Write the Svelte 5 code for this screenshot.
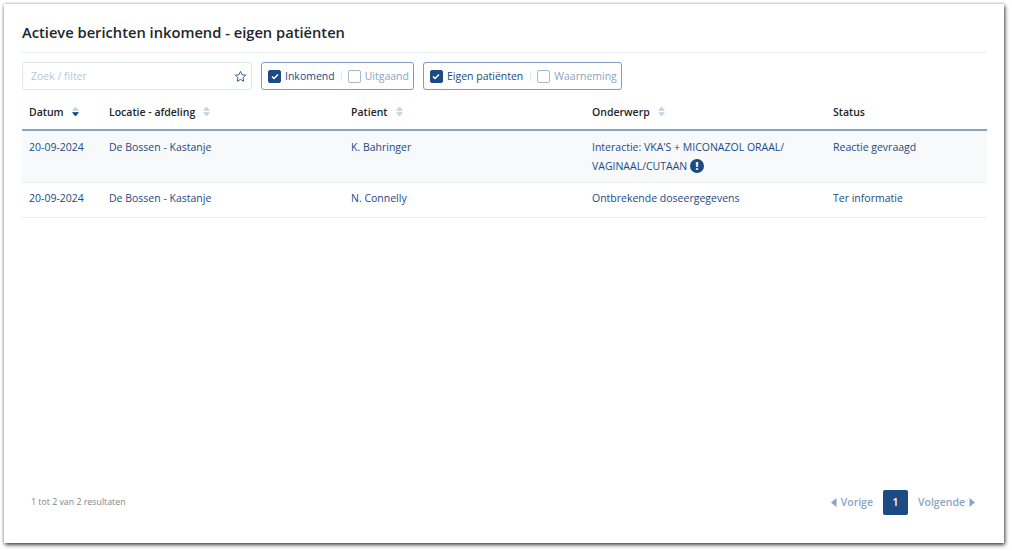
<script>
  const rows = [
    { date: '20-09-2024', loc: 'De Bossen - Kastanje', patient: 'K. Bahringer', subject: "Interactie: VKA'S + MICONAZOL ORAAL/ VAGINAAL/CUTAAN", alert: true, status: 'Reactie gevraagd' },
    { date: '20-09-2024', loc: 'De Bossen - Kastanje', patient: 'N. Connelly', subject: 'Ontbrekende doseergegevens', alert: false, status: 'Ter informatie' }
  ];
  const cols = [
    { label: 'Datum', sort: 'desc' },
    { label: 'Locatie - afdeling', sort: 'none' },
    { label: 'Patient', sort: 'none' },
    { label: 'Onderwerp', sort: 'none' },
    { label: 'Status' }
  ];
</script>

<div class="screen">
<div class="card">
  <h1>Actieve berichten inkomend - eigen patiënten</h1>
  <div class="filters">
    <div class="search">
      <span class="placeholder">Zoek / filter</span>
      <svg width="13" height="13" viewBox="0 0 24 24" fill="none" stroke="#2f5d94" stroke-width="1.800" stroke-linejoin="round"><path d="M12 2.500l2.900 6.200 6.700.8-5 4.600 1.400 6.700-6-3.400-6 3.400 1.400-6.700-5-4.600 6.700-.8z"/></svg>
    </div>
    <div class="group">
      <span class="box on"><svg width="8" height="7" viewBox="0 0 8 7" fill="none" stroke="#fff" stroke-width="1.500"><path d="M1 3.500l2 2 4-4"/></svg></span>
      <span class="on-label">Inkomend</span>
      <span class="sep"></span>
      <span class="box"></span>
      <span class="off-label">Uitgaand</span>
    </div>
    <div class="group">
      <span class="box on"><svg width="8" height="7" viewBox="0 0 8 7" fill="none" stroke="#fff" stroke-width="1.500"><path d="M1 3.500l2 2 4-4"/></svg></span>
      <span class="on-label">Eigen patiënten</span>
      <span class="sep"></span>
      <span class="box"></span>
      <span class="off-label">Waarneming</span>
    </div>
  </div>

  <table>
    <colgroup>
      <col class="c1" /><col class="c2" /><col class="c3" /><col class="c4" /><col />
    </colgroup>
    <thead>
      <tr>
        {#each cols as col}
          <th>
            <span class="th-in">
              {col.label}
              {#if col.sort}
                <svg class="sort" width="7" height="11" viewBox="0 0 7 11">
                  <path d="M3.500 1L6.300 4.300H.7z" fill="#c8d4e4" stroke="#c8d4e4" stroke-linejoin="round" />
                  <path d="M3.500 10L6.300 6.700H.7z" fill={col.sort === 'desc' ? '#1c4a85' : '#c8d4e4'} stroke={col.sort === 'desc' ? '#1c4a85' : '#c8d4e4'} stroke-linejoin="round" />
                </svg>
              {/if}
            </span>
          </th>
        {/each}
      </tr>
    </thead>
    <tbody>
      {#each rows as row}
        <tr>
          <td>{row.date}</td>
          <td>{row.loc}</td>
          <td>{row.patient}</td>
          <td class="subject">
            {row.subject}
            {#if row.alert}<span class="alert">!</span>{/if}
          </td>
          <td>{row.status}</td>
        </tr>
      {/each}
    </tbody>
  </table>

  <div class="footer">
    <span class="count">1 tot 2 van 2 resultaten</span>
    <div class="pager">
      <span class="nav">
        <svg width="6" height="9" viewBox="0 0 6 9"><path d="M5.500 0v9L0 4.500z" fill="#8ba4c4"/></svg>
        Vorige
      </span>
      <span class="page">1</span>
      <span class="nav">
        Volgende
        <svg width="6" height="9" viewBox="0 0 6 9"><path d="M.5 0v9L6 4.500z" fill="#8ba4c4"/></svg>
      </span>
    </div>
  </div>
</div>
</div>

<style>
  :global(body) {
    margin: 0;
    background: #fff;
  }
  .screen {
    box-sizing: border-box;
    width: 1012px;
    height: 551px;
    padding: 4px 8px 8px 4px;
    overflow: hidden;
  }
  .card {
    box-sizing: border-box;
    width: 1000px;
    height: 539px;
    padding: 0 17px 0 18px;
    background: #fff;
    font-family: "Open Sans", sans-serif;
    display: flex;
    flex-direction: column;
    box-shadow: 1px 2px 4px rgba(0, 0, 0, 0.7), 0 0 3px rgba(0, 0, 0, 0.25);
  }
  h1 {
    margin: 0;
    height: 49px;
    box-sizing: border-box;
    padding-top: 18px;
    font-size: 14.700px;
    line-height: 20px;
    font-weight: 600;
    color: #22262b;
    border-bottom: 1px solid #edf0f3;
  }
  .filters {
    display: flex;
    gap: 9px;
    margin-top: 9px;
    height: 28px;
  }
  .search {
    box-sizing: border-box;
    width: 230px;
    border: 1px solid #dfe6ef;
    border-radius: 3px;
    display: flex;
    align-items: center;
    justify-content: space-between;
    padding: 0 4px 0 8px;
    font-size: 10.500px;
    color: #b9c6d9;
  }
  .group {
    box-sizing: border-box;
    display: flex;
    align-items: center;
    padding: 0 4px 0 6px;
    border: 1px solid #7f9cc0;
    border-radius: 3px;
    font-size: 10.500px;
    font-weight: 500;
  }
  .box {
    box-sizing: border-box;
    width: 13px;
    height: 13px;
    border: 1px solid #a9b9cf;
    border-radius: 2px;
    display: flex;
    align-items: center;
    justify-content: center;
  }
  .box.on {
    background: #1c4a85;
    border-color: #1c4a85;
  }
  .on-label {
    color: #1c4a85;
    margin-left: 4px;
  }
  .off-label {
    color: #8ba4c4;
    margin-left: 4px;
  }
  .sep {
    width: 1px;
    height: 10px;
    background: #dfe6ef;
    margin: 0 6px;
  }
  .group:last-child .sep {
    margin-left: 7px;
  }
  table {
    width: 965px;
    margin-top: 4px;
    border-collapse: collapse;
    table-layout: fixed;
    font-size: 10.500px;
  }
  .c1 { width: 80px; }
  .c2 { width: 242px; }
  .c3 { width: 241px; }
  .c4 { width: 241px; }
  th {
    height: 35px;
    padding: 0 7px;
    text-align: left;
    font-weight: 600;
    color: #22262b;
    border-bottom: 2px solid #8aa4c6;
    white-space: nowrap;
  }
  .th-in {
    display: inline-flex;
    align-items: center;
    gap: 8px;
  }
  td {
    padding: 6px 7px 9px;
    vertical-align: top;
    line-height: 19px;
    color: #1c4a85;
    border-bottom: 1px solid #edf0f3;
  }
  tbody tr:first-child {
    background: #f8f9fb;
  }
  tbody tr:first-child td {
    padding-top: 7px;
    padding-bottom: 6px;
  }
  .subject {
    padding-right: 30px;
  }
  .alert {
    display: inline-flex;
    align-items: center;
    justify-content: center;
    width: 14px;
    height: 14px;
    border-radius: 50%;
    background: #1c4a85;
    color: #fff;
    font-size: 10px;
    font-weight: 800;
    vertical-align: 0;
    line-height: 1;
  }
  .footer {
    margin-top: auto;
    height: 66px;
    display: flex;
    justify-content: space-between;
    padding: 0 12px 0 9px;
    box-sizing: border-box;
  }
  .count {
    font-size: 8.800px;
    color: #80868c;
    margin-top: 19px;
  }
  .pager {
    display: flex;
    align-items: center;
    gap: 10px;
    height: 26px;
    margin-top: 12px;
    font-size: 10.500px;
    font-weight: 600;
    color: #8ba4c4;
  }
  .nav {
    display: inline-flex;
    align-items: center;
    gap: 4px;
  }
  .page {
    width: 25px;
    height: 25px;
    border-radius: 2px;
    background: #1c4a85;
    color: #fff;
    display: flex;
    align-items: center;
    justify-content: center;
  }
</style>
